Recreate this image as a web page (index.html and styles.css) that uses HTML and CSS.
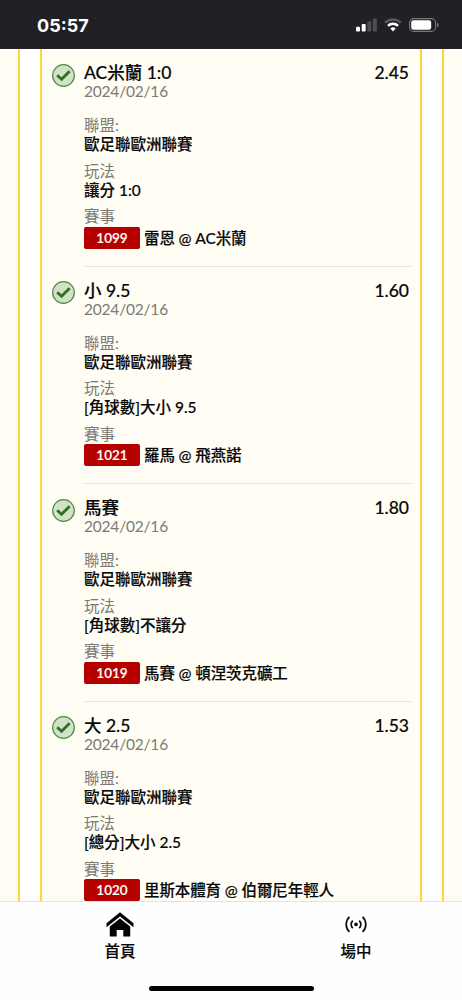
FILE: index.html
```html
<!DOCTYPE html>
<html lang="zh-Hant">
<head>
    <meta charset="UTF-8">
    <meta name="viewport" content="width=device-width, initial-scale=1.0">
    <title>投注紀錄</title>
    <link rel="stylesheet" href="styles.css">
</head>
<body>
    <svg class="symbols" width="0" height="0">
        <symbol id="check" viewBox="0 0 24 24">
            <circle cx="12" cy="12" r="11.3" fill="#d2e2c8" stroke="#4c8f42" stroke-width="1.3"/>
            <path d="M5.4 11.7l4.6 4.2 8.4-8.3" fill="none" stroke="#2c7420" stroke-width="3"/>
        </symbol>
    </svg>

    <header class="status-bar">
        <div class="clock">05:57</div>
        <div class="status-icons">
            <svg width="21" height="14" viewBox="0 0 21 14">
                <rect x="0" y="8.8" width="4" height="4.7" rx="1" fill="#fff"/>
                <rect x="5.7" y="6" width="4" height="7.5" rx="1" fill="#fff"/>
                <rect x="11.3" y="3.2" width="4" height="10.3" rx="1" fill="#4e4d52"/>
                <rect x="16.9" y="0.4" width="4" height="13.1" rx="1" fill="#4e4d52"/>
            </svg>
            <svg width="18" height="14" viewBox="0 0 18 14">
                <path d="M1.2 4.6a11.2 11.2 0 0 1 15.6 0" fill="none" stroke="#59585d" stroke-width="2.6"/>
                <path d="M4 7.9a7 7 0 0 1 10 0" fill="none" stroke="#fff" stroke-width="2.5"/>
                <path d="M6.3 10.6a4 4 0 0 1 5.4 0L9 13.4z" fill="#fff"/>
            </svg>
            <svg width="30" height="14" viewBox="0 0 30 14">
                <rect x="0.6" y="0.6" width="26" height="12.8" rx="4" fill="none" stroke="#77767b" stroke-width="1.1"/>
                <rect x="2.2" y="2.2" width="20" height="9.6" rx="2.4" fill="#fff"/>
                <path d="M28.1 4.8a2.3 2.3 0 0 1 0 4.4z" fill="#77767b"/>
            </svg>
        </div>
    </header>

    <main class="page">
        <div class="outer">
            <div class="inner">
                <div class="bet">
                    <svg class="check"><use href="#check"/></svg>
                    <div class="bet-body">
                        <div class="bet-title"><span>AC米蘭 1:0</span><span class="odds">2.45</span></div>
                        <div class="date">2024/02/16</div>
                        <div class="label">聯盟:</div>
                        <div class="value">歐足聯歐洲聯賽</div>
                        <div class="label">玩法</div>
                        <div class="value">讓分 1:0</div>
                        <div class="label">賽事</div>
                        <div class="match"><span class="number">1099</span>雷恩 @ AC米蘭</div>
                    </div>
                </div>
                <div class="bet">
                    <svg class="check"><use href="#check"/></svg>
                    <div class="bet-body">
                        <div class="bet-title"><span>小 9.5</span><span class="odds">1.60</span></div>
                        <div class="date">2024/02/16</div>
                        <div class="label">聯盟:</div>
                        <div class="value">歐足聯歐洲聯賽</div>
                        <div class="label">玩法</div>
                        <div class="value">[角球數]大小 9.5</div>
                        <div class="label">賽事</div>
                        <div class="match"><span class="number">1021</span>羅馬 @ 飛燕諾</div>
                    </div>
                </div>
                <div class="bet">
                    <svg class="check"><use href="#check"/></svg>
                    <div class="bet-body">
                        <div class="bet-title"><span>馬賽</span><span class="odds">1.80</span></div>
                        <div class="date">2024/02/16</div>
                        <div class="label">聯盟:</div>
                        <div class="value">歐足聯歐洲聯賽</div>
                        <div class="label">玩法</div>
                        <div class="value">[角球數]不讓分</div>
                        <div class="label">賽事</div>
                        <div class="match"><span class="number">1019</span>馬賽 @ 頓涅茨克礦工</div>
                    </div>
                </div>
                <div class="bet">
                    <svg class="check"><use href="#check"/></svg>
                    <div class="bet-body">
                        <div class="bet-title"><span>大 2.5</span><span class="odds">1.53</span></div>
                        <div class="date">2024/02/16</div>
                        <div class="label">聯盟:</div>
                        <div class="value">歐足聯歐洲聯賽</div>
                        <div class="label">玩法</div>
                        <div class="value">[總分]大小 2.5</div>
                        <div class="label">賽事</div>
                        <div class="match"><span class="number">1020</span>里斯本體育 @ 伯爾尼年輕人</div>
                    </div>
                </div>
            </div>
        </div>
    </main>

    <footer class="tab-bar">
        <nav class="tabs">
            <a class="tab">
                <svg width="28" height="26" viewBox="0 0 28 26">
                    <path d="M0.5 11.3L14 0.3l13.5 11v3.9L14 4.6 0.5 15.2z"/>
                    <path d="M3.8 14.6L14 6.6l10.2 8v9.9h-6.9v-6.6h-6.6v6.6H3.8z"/>
                </svg>
                <span>首頁</span>
            </a>
            <a class="tab">
                <svg width="22" height="26" viewBox="0 0 22 26">
                    <circle cx="11" cy="12.4" r="1.8"/>
                    <path class="wave" d="M7.8 8.6a5.2 5.2 0 0 0 0 7.6M14.2 8.6a5.2 5.2 0 0 1 0 7.6M4.4 4.9a10.4 10.4 0 0 0 0 15M17.6 4.9a10.4 10.4 0 0 1 0 15"/>
                </svg>
                <span>場中</span>
            </a>
        </nav>
        <div class="home-indicator"></div>
    </footer>
</body>
</html>
```
FILE: styles.css
```css
* {
    box-sizing: border-box;
}
body {
    margin: 0;
    height: 1000px;
    display: flex;
    flex-direction: column;
    overflow: hidden;
    font-family: Lato, "Noto Sans CJK TC", sans-serif;
    font-size: 15.5px;
    color: #080808;
    background-color: #fffdf4;
}
.symbols {
    display: none;
}
.status-bar {
    height: 49px;
    flex-shrink: 0;
    display: flex;
    justify-content: space-between;
    padding: 18px 23px 0 37px;
    background-color: #212025;
    color: #fff;
}
.clock {
    font-family: Inter, sans-serif;
    font-size: 18px;
    font-weight: 700;
    line-height: 15px;
}
.status-icons {
    display: flex;
    gap: 7px;
}
.page {
    flex: 1;
    min-height: 0;
    overflow: hidden;
    padding: 0 18px;
}
.outer {
    padding: 0 20px;
    border: solid #fdd835;
    border-width: 0 2px;
    background-color: #fff;
}
.inner {
    padding: 0 8px 0 10px;
    border: solid #fdd835;
    border-width: 0 2px;
    background-color: #fffdf4;
}
.bet {
    display: flex;
    height: 217.5px;
    padding-top: 14px;
}
.check {
    width: 23px;
    height: 23px;
    margin: 0.5px 9px 0 0;
    flex-shrink: 0;
}
.bet-body {
    flex: 1;
    border-bottom: 1px solid #e6e4dd;
}
.bet-title,
.value,
.match,
.tab {
    font-weight: 500;
    -webkit-text-stroke: 0.15px;
}
.bet-title {
    display: flex;
    justify-content: space-between;
    padding-right: 3px;
    font-size: 17.5px;
    line-height: 19px;
}
.date {
    margin-bottom: 16px;
    line-height: 18px;
    letter-spacing: -0.2px;
    color: #7b7a76;
}
.label {
    line-height: 18px;
    color: #7b7a76;
}
.value {
    margin-bottom: 7.5px;
    line-height: 20px;
}
.match {
    display: flex;
    align-items: center;
    margin-top: 1.5px;
    line-height: 22px;
    letter-spacing: -0.1px;
}
.number {
    width: 56px;
    height: 22px;
    margin-right: 4px;
    border-radius: 2px;
    background-color: #b50000;
    color: #fff;
    font-size: 13.5px;
    font-weight: 600;
    letter-spacing: 0;
    text-align: center;
}
.tab-bar {
    height: 99px;
    flex-shrink: 0;
    border-top: 1px solid #e4e3df;
    background-color: #fefefe;
}
.tabs {
    display: flex;
    height: 86px;
    padding: 10px 0 0 2px;
}
.tab {
    width: 236px;
    flex-shrink: 0;
    display: flex;
    flex-direction: column;
    align-items: center;
    line-height: 26px;
}
.wave {
    fill: none;
    stroke: #080808;
    stroke-width: 1.7;
}
.home-indicator {
    width: 165px;
    height: 5px;
    margin: -2px auto 0;
    border-radius: 3px;
    background-color: #000;
}
```
